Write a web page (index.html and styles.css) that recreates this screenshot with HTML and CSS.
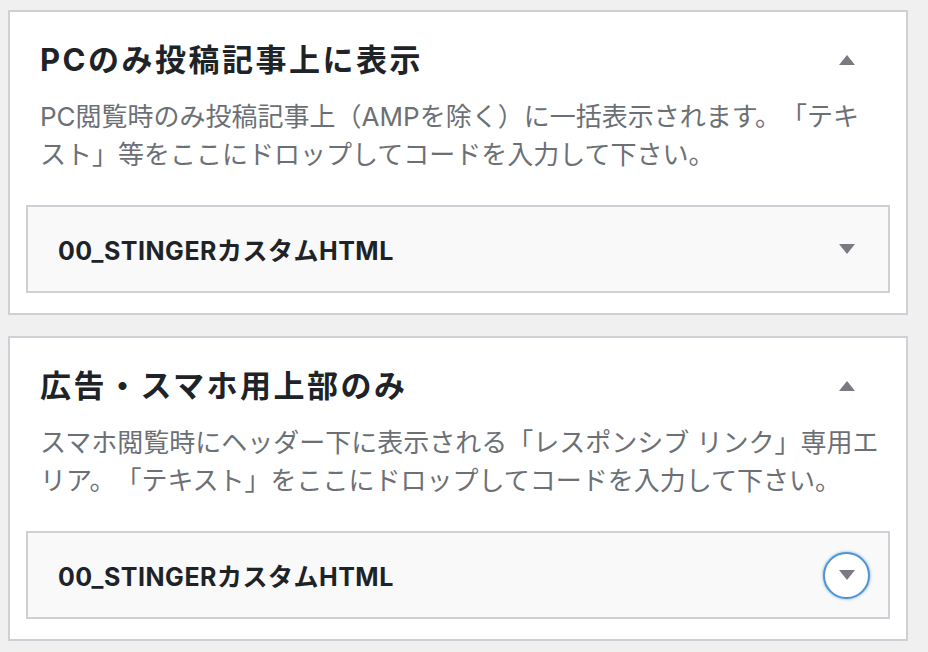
FILE: index.html
```html
<!DOCTYPE html>
<html lang="ja">
<head>
    <meta charset="UTF-8">
    <meta name="viewport" content="width=device-width, initial-scale=1.0">
    <title>Widget Areas</title>
    <link rel="stylesheet" href="styles.css">
</head>
<body>
    <div class="widget-areas">
        <div class="widget-area">
            <div class="area-header">
                <h2 class="area-title">PCのみ投稿記事上に表示</h2>
                <button class="toggle" type="button" aria-label="閉じる">
                    <svg width="16" height="10" viewBox="0 0 16 10"><polygon points="8,0 16,10 0,10"/></svg>
                </button>
            </div>
            <p class="area-desc">PC閲覧時のみ投稿記事上（AMPを除く）に一括表示されます。「テキスト」等をここにドロップしてコードを入力して下さい。</p>
            <div class="widget">
                <span class="widget-title">00_STINGERカスタムHTML</span>
                <button class="toggle" type="button" aria-label="開く">
                    <svg width="16" height="10" viewBox="0 0 16 10"><polygon points="0,0 16,0 8,10"/></svg>
                </button>
            </div>
        </div>

        <div class="widget-area">
            <div class="area-header">
                <h2 class="area-title">広告・スマホ用上部のみ</h2>
                <button class="toggle" type="button" aria-label="閉じる">
                    <svg width="16" height="10" viewBox="0 0 16 10"><polygon points="8,0 16,10 0,10"/></svg>
                </button>
            </div>
            <p class="area-desc">スマホ閲覧時にヘッダー下に表示される「レスポンシブ リンク」専用エリア。「テキスト」をここにドロップしてコードを入力して下さい。</p>
            <div class="widget">
                <span class="widget-title">00_STINGERカスタムHTML</span>
                <button class="toggle focused" type="button" aria-label="開く">
                    <svg width="16" height="10" viewBox="0 0 16 10"><polygon points="0,0 16,0 8,10"/></svg>
                </button>
            </div>
        </div>
    </div>
</body>
</html>
```

FILE: styles.css
```css
body {
    margin: 0;
    padding: 10px 20px 0 8px;
    background-color: #f0f0f1;
    font-family: Inter, "Noto Sans CJK JP", sans-serif;
    color: #1d2327;
    text-spacing-trim: space-all;
}

.widget-area {
    background-color: #fff;
    border: 2px solid #cdd0d4;
    padding: 28px 30px 20px 30px;
    margin-bottom: 21px;
}

.area-header {
    display: flex;
    align-items: center;
    justify-content: space-between;
    height: 40px;
    margin-right: 6px;
}

.area-title {
    margin: 0;
    font-size: 31px;
    font-weight: 700;
    line-height: 40px;
    letter-spacing: 2.5px;
    color: #1d2327;
}

.area-desc {
    margin: 18px -4px 31px 0;
    font-size: 26px;
    line-height: 38px;
    color: #6c7075;
}

.widget {
    display: flex;
    align-items: center;
    justify-content: space-between;
    height: 84px;
    margin: 0 -14px;
    padding: 0 18px 0 30px;
    background-color: #f9f9f9;
    border: 2px solid #cdd0d4;
}

.widget-title {
    font-size: 25px;
    font-weight: 700;
    letter-spacing: 0.5px;
    color: #1d2327;
}

.toggle {
    display: flex;
    align-items: center;
    justify-content: center;
    width: 47px;
    height: 47px;
    padding: 0;
    border: 2px solid transparent;
    border-radius: 50%;
    background: none;
    cursor: pointer;
}

.toggle svg {
    fill: #787c82;
}

.toggle.focused {
    border-color: #4f94d4;
    background-color: #fff;
    box-shadow: 0 0 3px rgba(79, 148, 212, 0.8);
}
```
